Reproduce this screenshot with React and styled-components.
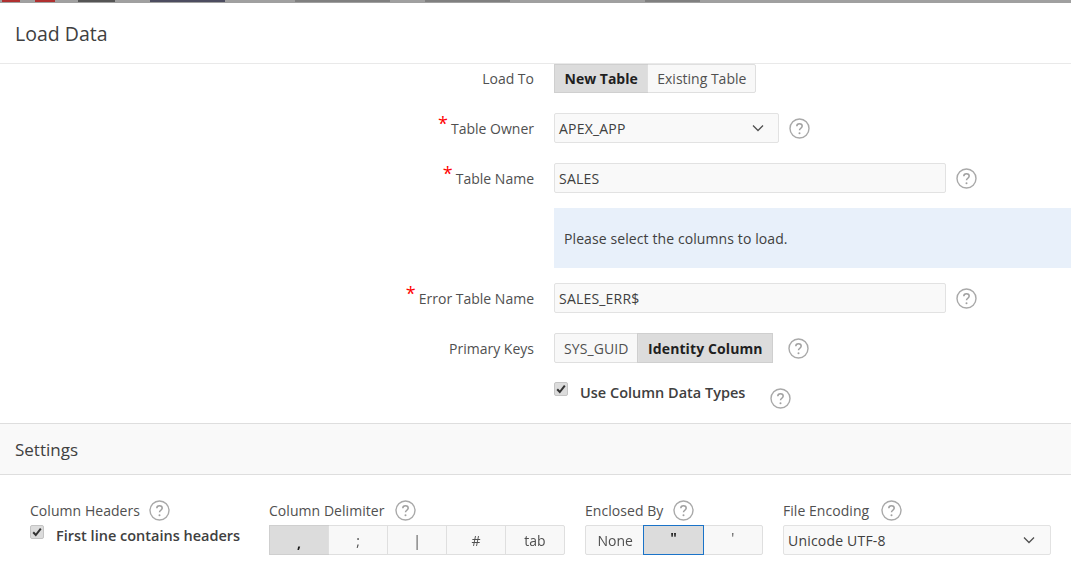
import React from "react";
import styled, { createGlobalStyle } from "styled-components";

const Global = createGlobalStyle`
  html, body { margin: 0; padding: 0; background: #fff; }
  body {
    font-family: "Open Sans", "Noto Sans", sans-serif;
    font-size: 14px;
    color: #404040;
    overflow: hidden;
  }
`;

const Page = styled.div`
  width: 1071px;
  height: 568px;
  overflow: hidden;
  display: flex;
  flex-direction: column;
`;

const BackdropStrip = styled.div`
  height: 3px;
  background: #a0a0a0;
  display: flex;
  overflow: hidden;
`;

const BackdropMark = styled.span`
  width: ${(p) => p.$w}px;
  margin-left: ${(p) => p.$left}px;
  height: 2px;
  background: ${(p) => p.$color};
`;

const Header = styled.header`
  height: 61px;
  box-sizing: border-box;
  border-bottom: 1px solid #e9e9e9;
  padding-left: 15px;
  display: flex;
  align-items: center;
  font-size: 19.5px;
  font-weight: 500;
  color: #404040;
`;

const Form = styled.div`
  display: flex;
  flex-direction: column;
  height: 360px;
  box-sizing: border-box;
  border-bottom: 1px solid #dedede;
`;

const Row = styled.div`
  display: grid;
  grid-template-columns: 534px auto;
  column-gap: 20px;
  justify-content: start;
  align-items: center;
  height: ${(p) => p.$height || 30}px;
  margin-top: ${(p) => p.$top || 0}px;
`;

const Label = styled.label`
  text-align: right;
  color: #505050;
  font-size: 14px;
  line-height: 20px;
  padding-top: ${(p) => (p.$flat ? 0 : 2)}px;
`;

const Star = styled.span`
  color: #f00;
  font-size: 18px;
  line-height: 10px;
  position: relative;
  top: -4px;
  margin-right: 3px;
`;

const Control = styled.div`
  display: flex;
  align-items: center;
`;

const Segments = styled.div`
  display: flex;
  height: ${(p) => p.$height || 30}px;
  box-sizing: border-box;
  border: 1px solid #dfdfdf;
  border-radius: 2px;
  background: #f8f8f8;
  width: ${(p) => (p.$width ? `${p.$width}px` : "auto")};
`;

const Segment = styled.div`
  flex: ${(p) => (p.$fill ? "1 1 0" : "0 0 auto")};
  padding: 0 ${(p) => (p.$fill ? 0 : p.$on ? 9.5 : 9)}px;
  display: flex;
  align-items: center;
  justify-content: center;
  font-size: 14px;
  letter-spacing: ${(p) => (p.$track ? 0.1 : 0)}px;
  color: ${(p) => (p.$on ? "#1f1f1f" : "#505050")};
  font-weight: ${(p) => (p.$on ? 700 : 400)};
  background: ${(p) => (p.$on ? "#dcdcdc" : "transparent")};
  border-left: 1px solid #dfdfdf;
  box-sizing: border-box;
  box-shadow: ${(p) => (p.$on ? "0 0 0 1px #cfcfcf" : "none")};
  &:first-child { border-left: 0; }
  ${(p) => p.$focus && "box-shadow: 0 0 0 1px #1a73c8; border-left: 0; z-index: 1;"}
`;

const Field = styled.div`
  width: ${(p) => p.$width}px;
  height: 30px;
  box-sizing: border-box;
  border: 1px solid #e2e2e2;
  border-radius: 2px;
  background: #f9f9f9;
  padding: 0 5px 0 4px;
  display: flex;
  align-items: center;
  justify-content: space-between;
  color: #404040;
  font-size: 14px;
  letter-spacing: 0.2px;
`;

const Chevron = styled.svg`
  width: 12px;
  height: 8px;
  margin-right: ${(p) => p.$right || 9}px;
  fill: none;
  stroke: #505050;
  stroke-width: 1.3;
`;

const HelpMark = styled.svg`
  width: 21px;
  height: 21px;
  margin-left: ${(p) => p.$gap}px;
  flex: none;
  position: relative;
  top: ${(p) => p.$down || 0}px;
`;

const Help = ({ gap = 10, down }) => (
  <HelpMark $gap={gap} $down={down} viewBox="0 0 21 21">
    <circle cx="10.5" cy="10.5" r="9.5" fill="#fff" stroke="#a9a9a9" strokeWidth="1.4" />
    <path
      d="M7.8 8.2c0-1.6 1.2-2.5 2.7-2.5s2.7.9 2.7 2.3c0 1.1-.6 1.7-1.5 2.3-.8.5-1.2 1-1.2 2"
      fill="none"
      stroke="#a0a0a0"
      strokeWidth="1.5"
    />
    <circle cx="10.5" cy="15.2" r="1" fill="#a0a0a0" />
  </HelpMark>
);

const Notice = styled.div`
  margin: 15px 0 0 554px;
  height: 60px;
  background: #e8f0fa;
  display: flex;
  align-items: center;
  padding-left: 10px;
  font-size: 14px;
  letter-spacing: 0.1px;
  color: #404040;
`;

const CheckRow = styled.div`
  margin: 19px 0 0 554px;
  display: flex;
  align-items: flex-start;
`;

const CheckBox = styled.span`
  width: 14px;
  height: 14px;
  flex: none;
  box-sizing: border-box;
  border-radius: 2px;
  border: 1px solid #c4c4c4;
  background: #dcdcdc;
  display: flex;
  align-items: center;
  justify-content: center;
`;

const CheckLabel = styled.span`
  font-weight: 600;
  font-size: 14.5px;
  line-height: 20px;
  color: #404040;
  margin-left: ${(p) => p.$gap}px;
  padding-top: 1px;
`;

const Tick = () => (
  <svg width="10" height="10" viewBox="0 0 10 10">
    <path d="M1.2 5.2 3.8 8 8.8 1.6" fill="none" stroke="#333" strokeWidth="2" />
  </svg>
);

const SettingsBar = styled.div`
  height: 51px;
  box-sizing: border-box;
  background: #f9f9f9;
  border-bottom: 1px solid #dedede;
  padding-left: 15px;
  display: flex;
  align-items: center;
  font-size: 17px;
  color: #404040;
`;

const Settings = styled.div`
  display: flex;
  padding: 25px 0 0 30px;
`;

const Group = styled.div`
  width: ${(p) => p.$width}px;
  margin-right: ${(p) => p.$right}px;
`;

const GroupLabel = styled.div`
  height: 21px;
  display: flex;
  align-items: center;
  color: #505050;
  font-size: 14px;
  line-height: 20px;
  letter-spacing: 0.05px;
`;

const GroupBody = styled.div`
  margin-top: 4px;
  display: flex;
  align-items: flex-start;
`;

const Glyph = styled.span`
  position: relative;
  top: ${(p) => p.$up || 0}px;
  filter: grayscale(1);
`;

export default function App() {
  return (
    <Page>
      <Global />
      <BackdropStrip>
        <BackdropMark $left={2} $w={18} $color="#b03030" />
        <BackdropMark $left={15} $w={20} $color="#b03030" />
        <BackdropMark $left={23} $w={37} $color="#555" />
        <BackdropMark $left={35} $w={75} $color="#4c4c60" />
        <BackdropMark $left={70} $w={95} $color="#808080" />
        <BackdropMark $left={35} $w={85} $color="#808080" />
        <BackdropMark $left={135} $w={55} $color="#808080" />
      </BackdropStrip>
      <Header>Load Data</Header>
      <Form>
        <Row $height={29}>
          <Label $flat>Load To</Label>
          <Control>
            <Segments $height={29}>
              <Segment $on>New Table</Segment>
              <Segment>Existing Table</Segment>
            </Segments>
          </Control>
        </Row>
        <Row $top={20}>
          <Label><Star>*</Star>Table Owner</Label>
          <Control>
            <Field $width={225}>
              APEX_APP
              <Chevron viewBox="0 0 12 8"><path d="M1 1.5 6 6.5 11 1.5" /></Chevron>
            </Field>
            <Help />
          </Control>
        </Row>
        <Row $top={20}>
          <Label><Star>*</Star>Table Name</Label>
          <Control>
            <Field $width={392}>SALES</Field>
            <Help />
          </Control>
        </Row>
        <Notice>Please select the columns to load.</Notice>
        <Row $top={15}>
          <Label><Star>*</Star>Error Table Name</Label>
          <Control>
            <Field $width={392}>SALES_ERR$</Field>
            <Help />
          </Control>
        </Row>
        <Row $top={20}>
          <Label>Primary Keys</Label>
          <Control>
            <Segments>
              <Segment $track>SYS_GUID</Segment>
              <Segment $track $on>Identity Column</Segment>
            </Segments>
            <Help gap={15} />
          </Control>
        </Row>
        <CheckRow>
          <CheckBox><Tick /></CheckBox>
          <CheckLabel $gap={12}>Use Column Data Types</CheckLabel>
          <Help gap={25} down={6} />
        </CheckRow>
      </Form>
      <SettingsBar>Settings</SettingsBar>
      <Settings>
        <Group $width={239} $right={0}>
          <GroupLabel>Column Headers<Help gap={9} /></GroupLabel>
          <GroupBody>
            <CheckBox><Tick /></CheckBox>
            <CheckLabel $gap={12}>First line contains headers</CheckLabel>
          </GroupBody>
        </Group>
        <Group $width={296} $right={20}>
          <GroupLabel>Column Delimiter<Help gap={10} /></GroupLabel>
          <GroupBody>
            <Segments $width={296}>
              <Segment $fill $on><Glyph $up={2}>,</Glyph></Segment>
              <Segment $fill><Glyph>;</Glyph></Segment>
              <Segment $fill><Glyph>|</Glyph></Segment>
              <Segment $fill><Glyph>#</Glyph></Segment>
              <Segment $fill><Glyph>tab</Glyph></Segment>
            </Segments>
          </GroupBody>
        </Group>
        <Group $width={178} $right={20}>
          <GroupLabel>Enclosed By<Help gap={10} /></GroupLabel>
          <GroupBody>
            <Segments $width={178}>
              <Segment $fill><Glyph>None</Glyph></Segment>
              <Segment $fill $on $focus><Glyph $up={-3}>"</Glyph></Segment>
              <Segment $fill><Glyph $up={-3}>'</Glyph></Segment>
            </Segments>
          </GroupBody>
        </Group>
        <Group $width={268} $right={0}>
          <GroupLabel>File Encoding<Help gap={12} /></GroupLabel>
          <GroupBody>
            <Field $width={268}>
              Unicode UTF-8
              <Chevron $right={10} viewBox="0 0 12 8"><path d="M1 1.5 6 6.5 11 1.5" /></Chevron>
            </Field>
          </GroupBody>
        </Group>
      </Settings>
    </Page>
  );
}
